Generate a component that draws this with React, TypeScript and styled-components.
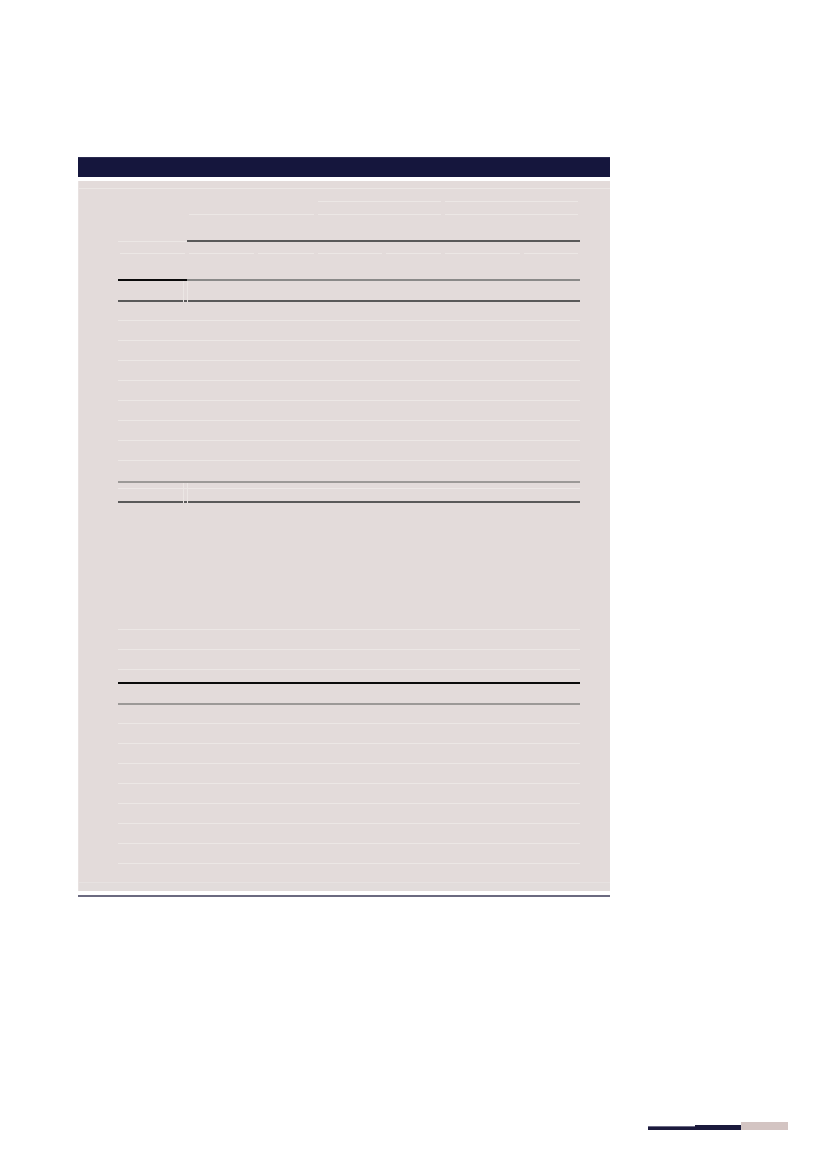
import React from 'react'
import styled, { createGlobalStyle } from 'styled-components'

type Tone = 'light' | 'dark' | 'gray' | 'soft' | 'black'

const toneColor: Record<Tone, string> = {
  light: '#ece7e5',
  dark: '#5a5959',
  gray: '#8a8988',
  soft: '#9c9997',
  black: '#0a0a0a',
}

const toneWidth: Record<Tone, number> = {
  light: 1,
  dark: 2,
  gray: 2,
  soft: 2,
  black: 2,
}

interface Seg {
  span: number
  tone: Tone
  inset?: boolean
}

interface Line {
  h: number
  segs: Seg[]
  divider?: boolean
}

const all = (tone: Tone): Seg[] => [{ span: 7, tone }]
const each = (tone: Tone): Seg[] =>
  Array.from({ length: 7 }, () => ({ span: 1, tone, inset: true }))
const repeat = (n: number, line: Line): Line[] => Array.from({ length: n }, () => line)

const lines: Line[] = [
  { h: 13, segs: [{ span: 3, tone: 'none' as Tone }, { span: 2, tone: 'light', inset: true }, { span: 2, tone: 'light', inset: true }] },
  { h: 13, segs: [{ span: 1, tone: 'none' as Tone }, { span: 2, tone: 'light', inset: true }, { span: 2, tone: 'light', inset: true }, { span: 2, tone: 'light', inset: true }] },
  { h: 27, segs: [{ span: 1, tone: 'light' }, { span: 6, tone: 'dark' }] },
  { h: 12, segs: each('light') },
  { h: 27, segs: [{ span: 1, tone: 'black' }, { span: 6, tone: 'gray' }] },
  { h: 21, segs: all('dark'), divider: true },
  { h: 19, segs: all('light') },
  ...repeat(7, { h: 20, segs: all('light') }),
  { h: 22, segs: all('soft') },
  { h: 6, segs: all('light'), divider: true },
  { h: 14, segs: all('dark'), divider: true },
  { h: 127, segs: all('light') },
  { h: 20, segs: all('light') },
  { h: 20, segs: all('light') },
  { h: 14, segs: all('black') },
  { h: 21, segs: all('soft') },
  { h: 19, segs: all('light') },
  ...repeat(7, { h: 20, segs: all('light') }),
]

const GlobalStyle = createGlobalStyle`
  html, body {
    margin: 0;
    padding: 0;
    background: #ffffff;
    font-family: "Liberation Sans", Arial, sans-serif;
  }
`

const Page = styled.div`
  width: 827px;
  height: 1169px;
  box-sizing: border-box;
  padding: 157px 0 0 78px;
  display: flex;
  flex-direction: column;
`

const TitleBar = styled.div`
  width: 532px;
  height: 20px;
  background: #15163d;
  border-top: 1px solid #2a2b50;
  box-sizing: border-box;
`

const Panel = styled.div`
  width: 532px;
  height: 710px;
  margin-top: 4px;
  background: #e3dbda;
  border-left: 1px solid #e8e2e1;
  box-sizing: border-box;
  display: flex;
  flex-direction: column;
`

const PanelHead = styled.div`
  height: 7px;
  border-bottom: 1px solid #ebe6e4;
`

const Table = styled.div`
  margin-left: 39px;
  width: 462px;
  display: flex;
  flex-direction: column;
`

const Row = styled.div<{ $h: number }>`
  height: ${p => p.$h}px;
  display: grid;
  grid-template-columns: 69px 69px 60px 68px 59px 79px 58px;
  align-items: end;
  position: relative;
`

const Cell = styled.div<{ $span: number; $tone: Tone | 'none'; $inset?: boolean }>`
  grid-column: span ${p => p.$span};
  height: ${p => (p.$tone === 'none' ? 0 : toneWidth[p.$tone as Tone])}px;
  background: ${p => (p.$tone === 'none' ? 'transparent' : toneColor[p.$tone as Tone])};
  margin: ${p => (p.$inset ? '0 2px 0 2px' : '0')};
`

const Divider = styled.div`
  position: absolute;
  left: 65px;
  top: 0;
  bottom: 0;
  width: 3px;
  border-left: 1px solid #ebe6e4;
  border-right: 1px solid #ebe6e4;
`

const PanelFoot = styled.div`
  margin-top: auto;
  height: 8px;
  background: #e2dcdb;
  border-top: 1px solid #e7e2e1;
`

const BottomRule = styled.div`
  width: 532px;
  height: 2px;
  margin-top: 4px;
  background: #6b6a80;
`

const Footer = styled.div`
  margin-top: auto;
  margin-bottom: 39px;
  margin-right: 39px;
  align-self: flex-end;
  display: flex;
  align-items: flex-end;
`

const Bar = styled.div<{ $w: number; $h: number; $c: string }>`
  width: ${p => p.$w}px;
  height: ${p => p.$h}px;
  background: ${p => p.$c};
`

const ThinBar = styled(Bar)`
  border-top: 1px solid #6d6c85;
  box-sizing: border-box;
`

export default function App() {
  return (
    <>
      <GlobalStyle />
      <Page>
        <TitleBar />
        <Panel>
          <PanelHead />
          <Table>
            {lines.map((line, i) => (
              <Row key={i} $h={line.h}>
                {line.divider && <Divider />}
                {line.segs.map((s, j) => (
                  <Cell key={j} $span={s.span} $tone={s.tone} $inset={s.inset} />
                ))}
              </Row>
            ))}
          </Table>
          <PanelFoot />
        </Panel>
        <BottomRule />
        <Footer>
          <ThinBar $w={47} $h={4} $c="#1b1a3c" />
          <Bar $w={46} $h={5} $c="#1b1a3c" />
          <Bar $w={47} $h={8} $c="#d3c4c2" />
        </Footer>
      </Page>
    </>
  )
}
